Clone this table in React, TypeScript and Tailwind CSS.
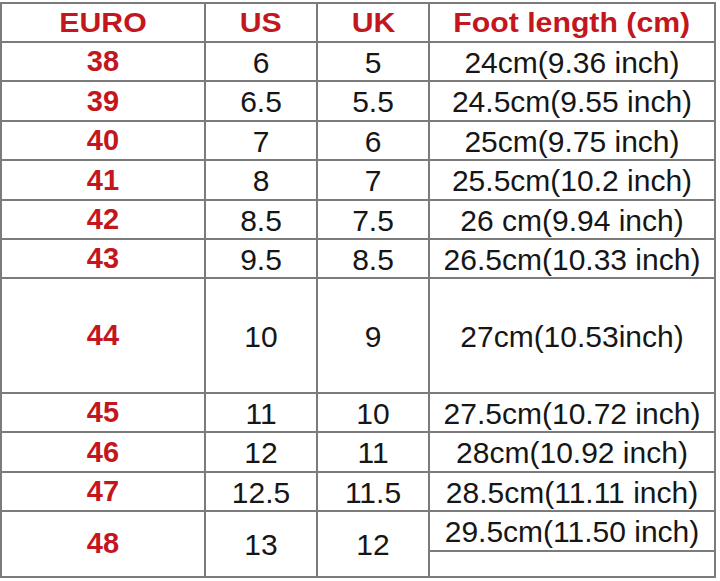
import React from 'react';

interface SizeRow {
  euro: string;
  us: string;
  uk: string;
  foot: string;
}

const rows: SizeRow[] = [
  { euro: '38', us: '6', uk: '5', foot: '24cm(9.36 inch)' },
  { euro: '39', us: '6.5', uk: '5.5', foot: '24.5cm(9.55 inch)' },
  { euro: '40', us: '7', uk: '6', foot: '25cm(9.75 inch)' },
  { euro: '41', us: '8', uk: '7', foot: '25.5cm(10.2 inch)' },
  { euro: '42', us: '8.5', uk: '7.5', foot: '26 cm(9.94 inch)' },
  { euro: '43', us: '9.5', uk: '8.5', foot: '26.5cm(10.33 inch)' },
  { euro: '44', us: '10', uk: '9', foot: '27cm(10.53inch)' },
  { euro: '45', us: '11', uk: '10', foot: '27.5cm(10.72 inch)' },
  { euro: '46', us: '12', uk: '11', foot: '28cm(10.92 inch)' },
  { euro: '47', us: '12.5', uk: '11.5', foot: '28.5cm(11.11 inch)' },
];

const headers = ['EURO', 'US', 'UK', 'Foot length (cm)'];

export default function App() {
  return (
    <div
      className="w-[720px] h-[581px] bg-white pt-[2px] overflow-hidden"
      style={{ fontFamily: '"Liberation Sans", Arial, sans-serif' }}
    >
      <div className="grid w-[716px] grid-cols-[202px_110px_110px_284px] grid-rows-[37px_37px_38px_37px_38px_37px_37px_113px_37px_38px_37px_64px] gap-[2px] bg-[#7b7b7b] p-[2px]">
        {/* Header */}
        {headers.map((h) => (
          <div key={h} className="flex items-center justify-center bg-white pt-[1px]">
            <span className="text-[27px] font-bold leading-none text-[#c3161d] scale-x-112">
              {h}
            </span>
          </div>
        ))}

        {/* Rows */}
        {rows.map((r) => (
          <React.Fragment key={r.euro}>
            <div className="flex items-center justify-center bg-white pt-[1px] text-[29px] font-bold text-[#c3161d]">
              {r.euro}
            </div>
            <div className="flex items-center justify-center bg-white pt-[1px] text-[30px] text-[#161616]">
              {r.us}
            </div>
            <div className="flex items-center justify-center bg-white pt-[1px] text-[30px] text-[#161616]">
              {r.uk}
            </div>
            <div className="flex items-center justify-center bg-white pt-[1px] text-[30px] text-[#161616] whitespace-nowrap">
              {r.foot}
            </div>
          </React.Fragment>
        ))}

        {/* Last row: foot length cell split in two */}
        <div className="flex items-center justify-center bg-white text-[29px] font-bold text-[#c3161d]">
          48
        </div>
        <div className="flex items-center justify-center bg-white text-[30px] text-[#161616]">
          13
        </div>
        <div className="flex items-center justify-center bg-white text-[30px] text-[#161616]">
          12
        </div>
        <div className="flex flex-col gap-[2px]">
          <div className="flex h-[38px] items-center justify-center bg-white text-[30px] text-[#161616] whitespace-nowrap">
            29.5cm(11.50 inch)
          </div>
          <div className="flex-1 bg-white" />
        </div>
      </div>
    </div>
  );
}
